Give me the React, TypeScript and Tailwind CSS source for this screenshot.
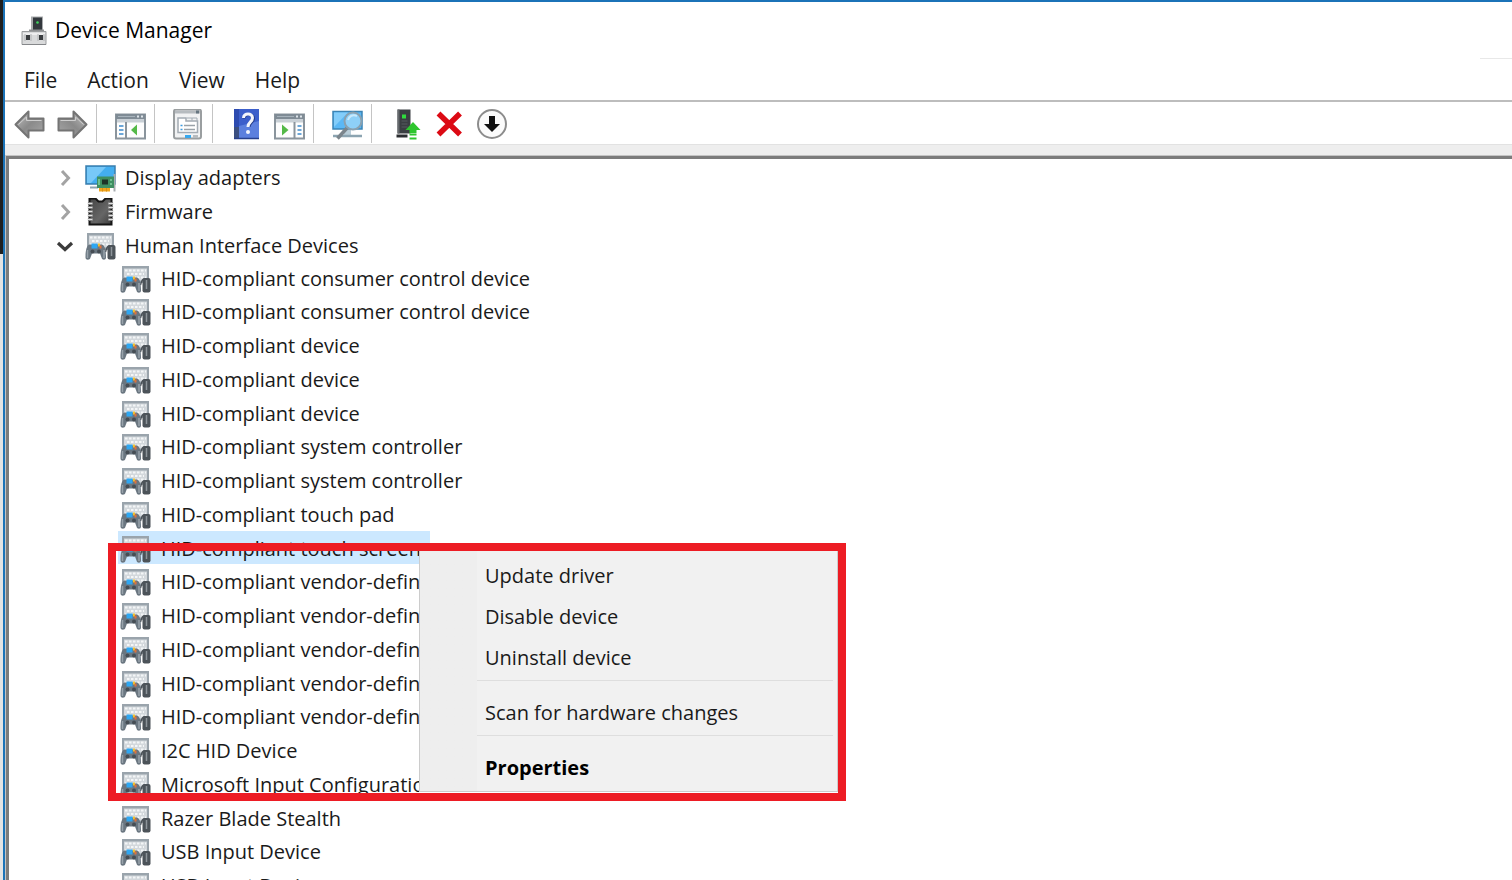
import React, { useState } from 'react';

const hidDevices = [
  'HID-compliant consumer control device',
  'HID-compliant consumer control device',
  'HID-compliant device',
  'HID-compliant device',
  'HID-compliant device',
  'HID-compliant system controller',
  'HID-compliant system controller',
  'HID-compliant touch pad',
  'HID-compliant touch screen',
  'HID-compliant vendor-defined',
  'HID-compliant vendor-defined',
  'HID-compliant vendor-defined',
  'HID-compliant vendor-defined',
  'HID-compliant vendor-defined',
  'I2C HID Device',
  'Microsoft Input Configuration Device',
  'Razer Blade Stealth',
  'USB Input Device',
  'USB Input Device',
];

const menus = ['File', 'Action', 'View', 'Help'];

const AppIcon = () => (
  <svg width="26" height="30" viewBox="0 0 26 30" aria-hidden="true">
    <path d="M10 0.5h12v15H10z" fill="#a9abad" />
    <path d="M12 1.5h9v13h-9z" fill="#33383d" />
    <circle cx="16.500" cy="6.500" r="1.300" fill="#3fd45c" />
    <path d="M8 13.500h15v2H8z" fill="#8e9092" />
    <path d="M1 15.500h24v13H1z" fill="#d9dadb" stroke="#9b9d9f" />
    <path d="M2 17h22v2H2z" fill="#eeeeef" />
    <path d="M5 19h4v5H5zM18 19h4v5h-4z" fill="#3a3d40" />
    <path d="M4 18v7M10 18v7M17 18v7M23 18v7" stroke="#b1b3b5" />
    <path d="M1 28.500h24" stroke="#85878a" />
  </svg>
);

const ArrowIcon = ({ flip }: { flip?: boolean }) => (
  <svg width="31" height="31" viewBox="0 0 31 31" className={flip ? '-scale-x-100' : ''} aria-hidden="true">
    <defs>
      <linearGradient id="arrowFill" x1="0" y1="0" x2="1" y2="1">
        <stop offset="0" stopColor="#c4c4c4" />
        <stop offset="0.500" stopColor="#8a8a8a" />
        <stop offset="1" stopColor="#a8a8a8" />
      </linearGradient>
    </defs>
    <path d="M1.500 15.500 14.500 2.500v7h15v12h-15v7z" fill="url(#arrowFill)" stroke="#747474" strokeWidth="2" strokeLinejoin="round" />
    <path d="M4.500 15.500 12.500 8v3.500h15" fill="none" stroke="#cfcfcf" />
  </svg>
);

// Window with a narrow list pane and a green arrow in the other pane
const PaneIcon = ({ right }: { right?: boolean }) => (
  <svg width="31" height="31" viewBox="0 0 31 31" aria-hidden="true">
    <path d="M1 5.500h29v24H1z" fill="#fdfdfd" stroke="#8a949c" strokeWidth="2" />
    <path d="M1 5h29v5H1z" fill="#7f8b95" />
    <path d="M3 7.500h17" stroke="#a7b3bc" />
    <path d="M22 6.500h2v2h-2zM26 6.500h2v2h-2z" fill="#dfe6eb" />
    <path d="M2 10h27v3.500H2z" fill="#c9d0d6" />
    {right ? (
      <>
        <path d="M20.500 13v16" stroke="#8a949c" strokeWidth="2" />
        <path d="M8 15.500v11l6.500-5.500z" fill="#54b948" />
        <path d="M23.500 17h4M23.500 21h4M23.500 25h4" stroke="#3d8bcb" strokeWidth="1.500" />
      </>
    ) : (
      <>
        <path d="M11 13v16" stroke="#8a949c" strokeWidth="2" />
        <path d="M22 15.500v11l-6-5.500z" fill="#54b948" />
        <path d="M4 17h4.500M4 21h4.500M4 25h4.500" stroke="#3d8bcb" strokeWidth="1.500" />
      </>
    )}
  </svg>
);

const PropertiesIcon = () => (
  <svg width="31" height="31" viewBox="0 0 31 31" aria-hidden="true">
    <rect x="1" y="0.500" width="27" height="29" rx="2" fill="#f1f2f3" stroke="#9a9ea0" strokeWidth="2" />
    <path d="M2 1.500h25v3H2z" fill="#b6bbbf" />
    <path d="M23 1.500h3v3h-3z" fill="#667580" />
    <path d="M5 9h8v3h11.500v11.500H5z" fill="#fff" stroke="#a3abb3" strokeWidth="1.500" />
    <path d="M14 9h5v2.500M19 9h5v2.500" fill="none" stroke="#a3abb3" />
    <path d="M7.500 16.500h2M7.500 20.500h2" stroke="#3d9be0" strokeWidth="1.500" />
    <path d="M11 16.500h11M11 20.500h11" stroke="#9aa2a9" strokeWidth="1.500" />
    <path d="M12 26h6v3h-6z" fill="#38a8ee" />
    <path d="M20 26h5v3h-5z" fill="#b6bbbf" />
  </svg>
);

const HelpIcon = () => (
  <svg width="31" height="31" viewBox="0 0 31 31" aria-hidden="true">
    <path d="M3 0h25v30H3z" fill="#3c5fcb" />
    <path d="M3 0h5v30H3z" fill="#2d4bb0" />
    <path d="M8 17 28 12v17H8z" fill="#5c80de" />
    <path d="M3 18h5v11H3z" fill="#3b4f80" />
    <path d="M3 29.500h25" stroke="#27408d" strokeWidth="1.500" />
    <path d="M13 9.500c0-5 9.500-5.500 9.500 0 0 4-4.500 4-4.500 8.500" fill="none" stroke="#233a86" strokeWidth="3" />
    <path d="M12.500 9c0-5.500 9-5.500 9 0 0 4-4.500 4-4.500 9" fill="none" stroke="#f4f6fc" strokeWidth="3" />
    <circle cx="17" cy="23" r="2" fill="#f4f6fc" />
  </svg>
);

const ScanIcon = () => (
  <svg width="31" height="31" viewBox="0 0 31 31" aria-hidden="true">
    <path d="M1 2.500h29V20H1z" fill="#5bb8f5" stroke="#3b84b5" strokeWidth="1.500" />
    <path d="M2 3.500h14L2 18z" fill="#83cdfa" />
    <path d="M12 21h7v5h-7z" fill="#b9cdd8" />
    <path d="M1 27h29" stroke="#8ca4b1" strokeWidth="2.500" />
    <path d="M15 19 5.500 29.500" stroke="#7b858c" strokeWidth="3.500" />
    <circle cx="21" cy="12" r="8.500" fill="#8ed0f8" stroke="#8aa1b0" strokeWidth="2" />
    <path d="M16 11c1-4 5-6 9-4" fill="none" stroke="#c9eafd" strokeWidth="2" />
  </svg>
);

const UpdateIcon = () => (
  <svg width="31" height="31" viewBox="0 0 31 31" aria-hidden="true">
    <path d="M7.500 0.500h13v24h-13z" fill="#3a3e42" />
    <path d="M7.500 0.500h2v24h-2z" fill="#666a6e" />
    <path d="M11.500 12h6M11.500 15h6M11.500 18h6" stroke="#555a5f" />
    <path d="M12 5.500h4v4h-4z" fill="#2fdc3d" />
    <path d="M6.500 25.500h11v3h-11z" fill="#2a2d30" />
    <path d="M23 13 30.500 21h-4v3h-7v-3h-4z" fill="#2ec52e" />
    <path d="M19.500 25.500h7M19.500 29.500h7" stroke="#2ec52e" strokeWidth="2" />
  </svg>
);

const UninstallIcon = () => (
  <svg width="31" height="31" viewBox="0 0 31 31" aria-hidden="true">
    <path d="M5.500 4.500 27 25.500M27 4.500 5.500 25.500" stroke="#dc0a14" strokeWidth="5.500" />
  </svg>
);

const DisableIcon = () => (
  <svg width="31" height="31" viewBox="0 0 31 31" aria-hidden="true">
    <circle cx="16" cy="15" r="14" fill="#fbfbfb" stroke="#8c8c8c" strokeWidth="2" />
    <path d="M13 7h6v8h5l-8 8-8-8h5z" fill="#111" />
  </svg>
);

const DisplayIcon = () => (
  <svg width="31" height="28" viewBox="0 0 31 28" aria-hidden="true">
    <path d="M1 2h29v18H1z" fill="#43aef0" stroke="#3a7fae" strokeWidth="1.500" />
    <path d="M2 3h19L6 19H2z" fill="#77c8f8" />
    <path d="M5 23.500h8" stroke="#8fa4b0" strokeWidth="2" />
    <path d="M29.500 10v17.500" stroke="#a8adb0" strokeWidth="2" />
    <path d="M12 12.500h17V24H12z" fill="#3f8f62" />
    <path d="M17 15.500h6v5h-6z" fill="#1d3328" />
    <path d="M14 15v6M26 15v2M26 19v2" stroke="#7fd09d" strokeWidth="1.500" />
    <path d="M14 24h11v3.500H14z" fill="#f0a41c" />
    <path d="M17.500 24v3.500M21.500 24v3.500" stroke="#d98f14" />
  </svg>
);

const FirmwareIcon = () => (
  <svg width="31" height="28" viewBox="0 0 31 28" aria-hidden="true">
    <defs>
      <linearGradient id="chipFill" x1="0" y1="0" x2="1" y2="1">
        <stop offset="0" stopColor="#444" />
        <stop offset="0.600" stopColor="#666" />
        <stop offset="1" stopColor="#3c3c3c" />
      </linearGradient>
    </defs>
    <path d="M4.500 0.500h6l3 3h4l3-3h6v26h-22z" fill="url(#chipFill)" stroke="#151515" strokeWidth="2" />
    <path d="M3 5.500h4M3 9.500h4M3 13.500h4M3 17.500h4M3 21.500h4M24 5.500h4M24 9.500h4M24 13.500h4M24 17.500h4M24 21.500h4" stroke="#1c1c1c" strokeWidth="3" />
    <path d="M2.500 5.500h5M2.500 9.500h5M2.500 13.500h5M2.500 17.500h5M2.500 21.500h5M23.500 5.500h5M23.500 9.500h5M23.500 13.500h5M23.500 17.500h5M23.500 21.500h5" stroke="#e2e2e2" strokeWidth="2" />
  </svg>
);

// Keyboard, gamepad and mouse
const HidIcon = () => (
  <svg width="31" height="28" viewBox="0 0 31 28" aria-hidden="true">
    <path d="M2 1h27v17H2z" fill="#9aa4ac" />
    <path d="M4 3.500h23v12H4z" fill="#d3d8dc" />
    <path d="M5 5.500h21M7 9h17M5 12.500h21" stroke="#f4f6f7" strokeWidth="2" strokeDasharray="2.500 1.500" />
    <path d="M20.500 20c1-3 1-6 4-6" fill="none" stroke="#4a5056" strokeWidth="1.500" />
    <rect x="22.500" y="13" width="8" height="14.500" rx="2" fill="#4c5359" />
    <path d="M26.500 15v9" stroke="#8d949a" strokeWidth="1.500" />
    <path d="M4.500 12.500h12.500c3 1 4 6 4 13 0 3-4 3-4.500 0L15 21.500H7l-1.500 4c-.5 3-5 3-5 0 0-7 1-12 4-13z" fill="#6a7680" />
    <path d="M2.500 18v8M19 18v8" stroke="#98a2aa" strokeWidth="1.500" />
    <path d="M6.500 11.500h6v5h-6z" fill="#2ea7f2" />
    <path d="M13 11.500h2v3h-2z" fill="#f2c12e" />
    <path d="M14.500 13.500h2v3h-2z" fill="#e0703b" />
    <circle cx="7.500" cy="19.500" r="2" fill="#454d54" />
    <circle cx="14" cy="19.500" r="2" fill="#454d54" />
  </svg>
);

const Chevron = ({ open }: { open?: boolean }) => (
  <svg width="18" height="18" viewBox="0 0 18 18" fill="none" aria-hidden="true">
    {open ? (
      <path d="M2 6l7 6.500L16 6" stroke="#3b3b3b" strokeWidth="3.200" />
    ) : (
      <path d="M6 2l6.500 7L6 16" stroke="#a3a3a3" strokeWidth="3" />
    )}
  </svg>
);

const toolGroups = [
  [
    { label: 'Back', icon: <ArrowIcon /> },
    { label: 'Forward', icon: <ArrowIcon flip /> },
  ],
  [{ label: 'Show or hide console tree', icon: <PaneIcon /> }],
  [{ label: 'Properties', icon: <PropertiesIcon /> }],
  [
    { label: 'Help', icon: <HelpIcon /> },
    { label: 'Show or hide action pane', icon: <PaneIcon right /> },
  ],
  [{ label: 'Scan for hardware changes', icon: <ScanIcon /> }],
  [
    { label: 'Update driver', icon: <UpdateIcon /> },
    { label: 'Uninstall device', icon: <UninstallIcon /> },
    { label: 'Disable device', icon: <DisableIcon /> },
  ],
];

const Category = ({ name, icon, open }: { name: string; icon: React.ReactNode; open?: boolean }) => (
  <button aria-expanded={!!open} className="flex h-[34px] items-center pt-1 pl-[47px] text-left">
    <Chevron open={open} />
    <span className="ml-[11px] shrink-0">{icon}</span>
    <span className="ml-[9px] whitespace-nowrap">{name}</span>
  </button>
);

const MenuItem = ({ children, bold }: { children: React.ReactNode; bold?: boolean }) => (
  <button role="menuitem" className={`block h-[41px] w-full pl-[65px] text-left ${bold ? 'font-bold text-black' : ''}`}>
    {children}
  </button>
);

const MenuDivider = () => <hr className="mt-0.5 mr-1 mb-[11px] ml-[57px] border-t border-[#dedede]" />;

const ContextMenu = () => (
  <div role="menu" className="absolute top-[550px] left-[419px] w-[419px] border border-[#cccccc] bg-linear-to-r from-[#eeeeee] from-[57px] to-[#f1f1f1] to-[57px] pt-1 pb-[3px]">
    <MenuItem>Update driver</MenuItem>
    <MenuItem>Disable device</MenuItem>
    <MenuItem>Uninstall device</MenuItem>
    <MenuDivider />
    <MenuItem>Scan for hardware changes</MenuItem>
    <MenuDivider />
    <MenuItem bold>Properties</MenuItem>
  </div>
);

export default function App() {
  const [selected, setSelected] = useState(8);

  return (
    <div className="relative flex h-screen overflow-hidden bg-white font-['Open_Sans','Noto_Sans',sans-serif] text-xl text-[#1a1a1a]">
      {/* Sliver of the desktop behind the window */}
      <div className="flex w-[3px] shrink-0 flex-col bg-[#e4e4e4]">
        <div className="h-[254px] bg-[#1f1f1f]"></div>
      </div>

      <main className="flex min-w-0 flex-1 flex-col border-t-2 border-l-2 border-[#1b73b8]">
        <header className="flex h-[57px] shrink-0 items-center justify-between">
          <div className="flex items-center pl-4">
            <AppIcon />
            <h1 className="ml-2 text-[21px] text-black">Device Manager</h1>
          </div>
          <div className="w-8 self-end border-b border-[#e8e8e8]"></div>
        </header>

        <nav className="flex h-[41px] shrink-0 items-center pt-0.5 pl-1 text-[21px]">
          {menus.map((menu) => (
            <button key={menu} className="px-[15px]">{menu}</button>
          ))}
        </nav>

        <div role="toolbar" className="flex h-[44px] shrink-0 items-center border-t-2 border-[#bdbdbd] pl-[3px]">
          {toolGroups.map((group, i) => (
            <React.Fragment key={i}>
              {i > 0 && <div className="mr-3 ml-0.5 h-[39px] w-px bg-[#c4c4c4]"></div>}
              {group.map((tool) => (
                <button key={tool.label} aria-label={tool.label} className="flex w-[43px] justify-center pt-0.5">
                  {tool.icon}
                </button>
              ))}
            </React.Fragment>
          ))}
        </div>

        <div className="h-[11px] shrink-0 border-t border-[#e2e2e2] bg-[#eeeeee]"></div>

        <div className="flex min-h-0 flex-1 flex-col overflow-hidden border-t border-l border-[#c4c4c4]">
          <ul className="flex-1 border-t-3 border-l-3 border-[#7c7c7c]">
            <li>
              <Category name="Display adapters" icon={<DisplayIcon />} />
            </li>
            <li>
              <Category name="Firmware" icon={<FirmwareIcon />} />
            </li>
            <li>
              <Category name="Human Interface Devices" icon={<HidIcon />} open />
              <ul className="pl-[109px]">
                {hidDevices.map((name, i) => (
                  <li key={i} className="flex h-[34px] nth-[4n+1]:h-[33px]">
                    <button
                      onClick={() => setSelected(i)}
                      className={`flex items-center pt-0.5 pr-[9px] pl-0.5 ${selected === i ? 'bg-[#cce8ff]' : ''}`}
                    >
                      <HidIcon />
                      <span className="ml-2.5 whitespace-nowrap">{name}</span>
                    </button>
                  </li>
                ))}
              </ul>
            </li>
          </ul>
        </div>
      </main>

      <ContextMenu />
      {/* Callout frame */}
      <div className="pointer-events-none absolute top-[543px] left-[108px] h-[258px] w-[738px] border-8 border-[#ed1c24]"></div>
    </div>
  );
}
